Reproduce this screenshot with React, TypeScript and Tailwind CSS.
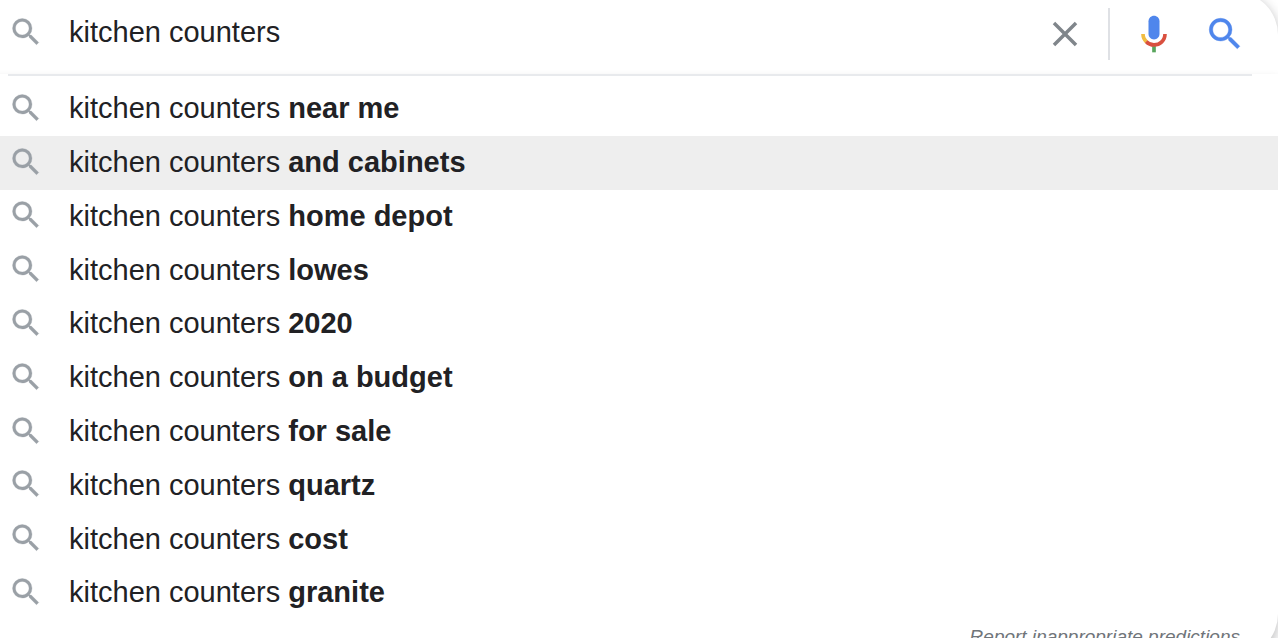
import { useState } from "react";

interface IconProps {
  className?: string;
}

const PREFIX = "kitchen counters";

const SUGGESTIONS = [
  "near me",
  "and cabinets",
  "home depot",
  "lowes",
  "2020",
  "on a budget",
  "for sale",
  "quartz",
  "cost",
  "granite",
];

function SearchIcon({ className }: IconProps) {
  return (
    <svg
      viewBox="0 0 24 24"
      fill="currentColor"
      stroke="currentColor"
      strokeWidth="0.2"
      className={className}
      aria-hidden="true"
    >
      <path d="M15.5 14h-.79l-.28-.27A6.471 6.471 0 0 0 16 9.5 6.5 6.5 0 1 0 9.5 16c1.61 0 3.09-.59 4.23-1.57l.27.28v.79l5 4.99L20.49 19l-4.99-5zm-6 0C7.01 14 5 11.99 5 9.5S7.01 5 9.5 5 14 7.01 14 9.5 11.99 14 9.5 14z" />
    </svg>
  );
}

function CloseIcon({ className }: IconProps) {
  return (
    <svg viewBox="0 0 24 24" fill="currentColor" className={className} aria-hidden="true">
      <path d="M19 6.41L17.59 5 12 10.59 6.41 5 5 6.41 10.59 12 5 17.59 6.41 19 12 13.41 17.59 19 19 17.59 13.41 12z" />
    </svg>
  );
}

function MicIcon({ className }: IconProps) {
  return (
    <svg viewBox="0 0 24 24" className={className} aria-hidden="true">
      <path
        fill="#4f86ec"
        d="m12 15c1.66 0 3-1.31 3-2.97v-7.02c0-1.66-1.34-3.01-3-3.01s-3 1.34-3 3.01v7.02c0 1.66 1.34 2.97 3 2.97z"
      />
      <path fill="#58a55c" d="m11 18.08h2v3.92h-2z" />
      <path
        fill="#f1bd42"
        d="m7.05 16.87c-1.27-1.33-2.05-2.83-2.05-4.87h2c0 1.45 0.56 2.42 1.47 3.38v0.32l-1.15 1.18z"
      />
      <path
        fill="#d9503f"
        d="m12 16.93a4.97 5.25 0 0 1 -3.54 -1.55l-1.41 1.49c1.26 1.34 3.02 2.13 4.95 2.13 3.87 0 6.99-2.92 6.99-7h-1.99c0 2.92-2.24 4.93-5 4.93z"
      />
    </svg>
  );
}

export default function App() {
  const [query, setQuery] = useState(PREFIX);
  const [active, setActive] = useState(1);

  return (
    <main className="h-screen overflow-hidden bg-white font-['Liberation_Sans',Arial,sans-serif] text-[29px] text-[#212124]">
      {/* the box runs a little past the top and left of the window */}
      <div className="-mt-2 -ml-[18px]">
        {/* SEARCH BAR */}
        <form
          role="search"
          onSubmit={(e) => e.preventDefault()}
          className="flex h-[82px] items-center rounded-t-[43px] bg-white pt-0.5 pr-8 pl-[26px] shadow-[0_2px_11px_rgba(32,33,36,0.28)]"
        >
          <div className="flex min-w-0 flex-1 items-center pb-1">
            <SearchIcon className="size-9 shrink-0 text-[#9aa0a6]" />
            <input
              type="text"
              aria-label="Search"
              value={query}
              onChange={(e) => setQuery(e.target.value)}
              className="ml-[25px] h-11 min-w-0 flex-1 bg-transparent leading-[44px] outline-none"
            />
          </div>
          <button type="button" aria-label="Clear" onClick={() => setQuery("")}>
            <CloseIcon className="size-[42px] text-[#80868b]" />
          </button>
          <div className="ml-[22px] h-[52px] w-0.5 bg-[#dfe1e5]" />
          <button type="button" aria-label="Search by voice" className="ml-[22px]">
            <MicIcon className="size-11" />
          </button>
          <button type="submit" aria-label="Search" className="ml-7">
            <SearchIcon className="size-[42px] text-[#4f86ec]" />
          </button>
        </form>

        {/* SUGGESTIONS */}
        <div className="relative rounded-b-[43px] bg-white pb-2 shadow-[0_7px_11px_rgba(32,33,36,0.28)]">
          <div className="mr-[26px] ml-[26px] h-0.5 bg-[#e8eaed]" />
          <ul className="mt-1.5 grid h-[538px] auto-rows-fr">
            {SUGGESTIONS.map((text, index) => (
              <li key={text} className="flex">
                <button
                  type="button"
                  onMouseEnter={() => setActive(index)}
                  onClick={() => setQuery(`${PREFIX} ${text}`)}
                  className={`flex w-full items-center pl-[26px] text-left ${
                    index === active ? "bg-[#eeeeee]" : ""
                  }`}
                >
                  <SearchIcon className="mb-0.5 size-9 shrink-0 text-[#9aa0a6]" />
                  <span className="ml-[25px]">
                    {PREFIX} <b>{text}</b>
                  </span>
                </button>
              </li>
            ))}
          </ul>
          <div className="mt-[5px] flex justify-end pr-[38px]">
            <a href="#report" className="text-[19px] leading-6 text-[#70757a] italic">
              Report inappropriate predictions
            </a>
          </div>
        </div>
      </div>
    </main>
  );
}
